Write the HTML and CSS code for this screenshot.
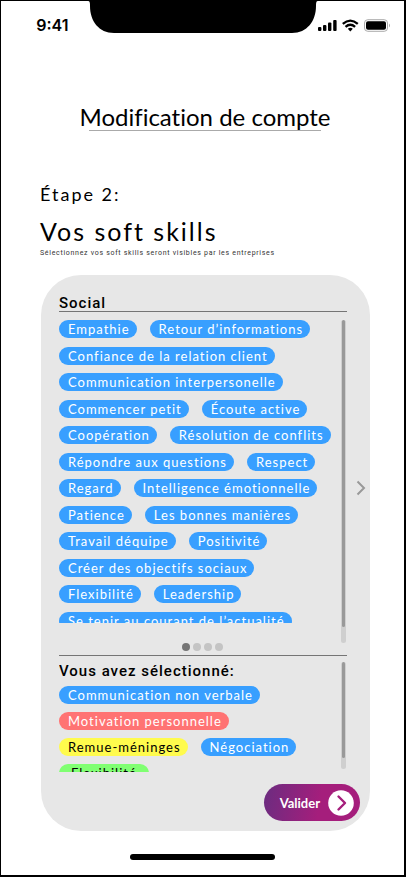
FILE: index.html
```html
<!DOCTYPE html>
<html lang="fr">
<head>
<meta charset="utf-8">
<meta name="viewport" content="width=device-width, initial-scale=1">
<title>Modification de compte</title>
<link rel="stylesheet" href="styles.css">
</head>
<body>
<div class="screen">
  <header class="status">
    <span class="time">9:41</span>
    <svg class="notch" width="230" height="32" viewBox="0 0 230 32" aria-hidden="true"><path d="M0 0C2 0 2 2 2 5C2 20 11 32 26 32H204C219 32 228 20 228 5C228 2 228 0 230 0Z"/></svg>
    <svg class="signals" width="73" height="14" viewBox="0 0 73 14" aria-hidden="true">
      <rect x="0" y="8" width="3.4" height="4" rx="1"/>
      <rect x="5" y="6" width="3.4" height="6" rx="1"/>
      <rect x="10" y="3.4" width="3.4" height="8.6" rx="1"/>
      <rect x="15.2" y="1" width="3.4" height="11" rx="1"/>
      <g fill="none" stroke="#000" stroke-width="2.3"><path d="M24.8 4.9Q32.3-1.7 39.8 4.9"/><path d="M27.5 7.9Q32.3 3.7 37.1 7.9"/></g>
      <path d="M29.8 9.8Q32.3 7.8 34.8 9.8L32.3 12.4Z"/>
      <rect x="46.5" y="0.7" width="23" height="11.6" rx="3.3" fill="none" stroke="#aaa"/>
      <rect x="48" y="2.2" width="20" height="8.6" rx="2"/>
      <path d="M71 4.5Q73 6.5 71 8.5Z" fill="#aaa"/>
    </svg>
  </header>
  <main>
    <h1>Modification de compte</h1>
    <section class="intro">
      <p class="step">Étape 2:</p>
      <h2>Vos soft skills</h2>
      <p class="note">Sélectionnez vos soft skills seront visibles par les entreprises</p>
    </section>
    <section class="card">
      <div class="panel">
        <h3>Social</h3>
        <div class="scroller social">
          <div class="view">
            <div class="rows">
              <div class="row"><button class="tag">Empathie</button><button class="tag">Retour d’informations</button></div>
              <div class="row"><button class="tag">Confiance de la relation client</button></div>
              <div class="row"><button class="tag">Communication interpersonelle</button></div>
              <div class="row"><button class="tag">Commencer petit</button><button class="tag">Écoute active</button></div>
              <div class="row"><button class="tag">Coopération</button><button class="tag">Résolution de conflits</button></div>
              <div class="row"><button class="tag">Répondre aux questions</button><button class="tag">Respect</button></div>
              <div class="row"><button class="tag">Regard</button><button class="tag">Intelligence émotionnelle</button></div>
              <div class="row"><button class="tag">Patience</button><button class="tag">Les bonnes manières</button></div>
              <div class="row"><button class="tag">Travail déquipe</button><button class="tag">Positivité</button></div>
              <div class="row"><button class="tag">Créer des objectifs sociaux</button></div>
              <div class="row"><button class="tag">Flexibilité</button><button class="tag">Leadership</button></div>
              <div class="row"><button class="tag">Se tenir au courant de l’actualité</button></div>
            </div>
          </div>
          <div class="track"><div class="thumb"></div></div>
          <div class="dots"><i class="on"></i><i></i><i></i><i></i></div>
        </div>
        <div class="scroller chosen">
          <div class="view">
            <h3>Vous avez sélectionné:</h3>
            <div class="rows">
              <div class="row"><button class="tag">Communication non verbale</button></div>
              <div class="row"><button class="tag red">Motivation personnelle</button></div>
              <div class="row"><button class="tag yellow">Remue-méninges</button><button class="tag">Négociation</button></div>
              <div class="row"><button class="tag green">Flexibilité</button></div>
            </div>
          </div>
          <div class="track"><div class="thumb"></div></div>
        </div>
      </div>
      <button class="next" aria-label="Catégorie suivante"><svg width="10" height="16" viewBox="0 0 10 16"><path d="M1.5 1.5L8 8L1.5 14.5" fill="none" stroke="#999" stroke-width="2"/></svg></button>
      <button class="submit">Valider
        <svg width="26" height="26" viewBox="0 0 26 26" aria-hidden="true"><circle cx="13" cy="13" r="12.8" fill="#fff"/><path d="M10.5 6.5L17 13L10.5 19.5" fill="none" stroke="#a51e7c" stroke-width="2.4" stroke-linecap="round" stroke-linejoin="round"/></svg>
      </button>
    </section>
  </main>
  <div class="home"></div>
</div>
</body>
</html>
```
FILE: styles.css
```css
* { box-sizing: border-box; }

body {
  margin: 0;
  background: #fff;
  color: #000;
  font-family: Lato, "Open Sans", sans-serif;
  font-variant-ligatures: none;
}

.screen {
  display: flex;
  flex-direction: column;
  min-height: 100vh;
  border: solid #000;
  border-width: 1px 2px 2px 1px;
}

h1, h2, h3, p { margin: 0; font-weight: 400; }

button {
  margin: 0;
  padding: 0;
  border: 0;
  background: none;
  font: inherit;
  color: inherit;
  cursor: pointer;
}

.status {
  display: grid;
  grid-template-columns: 1fr auto 1fr;
  height: 48px;
}

.time {
  justify-self: end;
  margin: 14px 19px 0 0;
  font: 600 16px/20px Inter, sans-serif;
}

.notch { display: block; }

.signals { margin: 18px 0 0 0; }

main { padding: 54px 34px 0 39px; }

h1 {
  width: fit-content;
  margin: 0 auto;
  font-size: 24px;
  line-height: 28px;
  background: linear-gradient(#aaa, #aaa) center bottom / 232px 1px no-repeat;
  white-space: nowrap;
}

.intro { margin-top: 52px; }

.step {
  font-size: 18px;
  line-height: 22px;
  letter-spacing: 2px;
}

h2 {
  margin-top: 11px;
  font-size: 25px;
  line-height: 30px;
  letter-spacing: 2px;
}

.note {
  margin-top: 1px;
  font: 7px/12px Roboto, sans-serif;
  letter-spacing: 0.1em;
  color: #333;
}

.card {
  display: grid;
  grid-template-columns: 1fr 10px;
  column-gap: 9px;
  margin: 16px 0 0 1px;
  padding: 20px 4px 10px 18px;
  border-radius: 40px;
  background: #e7e7e7;
}

h3 {
  font: 500 15px/16px Roboto, sans-serif;
  letter-spacing: 1px;
}

.panel > h3 {
  height: 17px;
  border-bottom: 1px solid #757575;
}

.scroller {
  display: grid;
  grid-template-columns: 1fr 5px;
  column-gap: 8px;
  padding-right: 1px;
}

.social {
  margin-top: 8px;
  padding-bottom: 11px;
  border-bottom: 1px solid #757575;
}

.social .view { height: 303px; }

.view { overflow: hidden; }

.rows {
  display: flex;
  flex-direction: column;
  justify-content: space-between;
}

.social .rows { height: 310px; }

.row { display: flex; gap: 13px; }

.tag {
  height: 18px;
  padding: 0 7px 0 9px;
  border-radius: 9px;
  background: #389fff;
  color: #fff;
  font-size: 13px;
  line-height: 18px;
  letter-spacing: 1px;
  white-space: nowrap;
}

.red { background: #ff7373; }
.yellow { background: #fffb4d; color: #000; }
.green { background: #80ff72; color: #000; padding: 0 12px; }

.track {
  border-radius: 3px;
  background: #cfcfcf;
}

.thumb {
  width: 3px;
  height: 95%;
  margin: 0 auto;
  border-radius: 2px;
  background: #999;
}

.social .track { height: 323px; grid-column: 2; grid-row: 1 / span 2; }

.dots {
  grid-column: 1;
  align-self: end;
  display: flex;
  justify-content: center;
  gap: 3px;
  margin: 20px 0 -7px 13px;
}

.dots i {
  width: 8px;
  height: 8px;
  border-radius: 50%;
  background: #c4c4c4;
}

.dots .on { background: #757575; }

.chosen { margin-top: 6px; }
.chosen .view { height: 110px; }
.chosen h3 { margin: 1px 0 7px; }
.chosen .rows { gap: 8px; }
.chosen .track { height: 107px; }
.chosen .thumb { height: 90%; }

.next { align-self: center; margin-bottom: 91px; }
.next svg, .submit svg { display: block; }

.submit {
  grid-column: 1 / -1;
  justify-self: end;
  display: flex;
  align-items: center;
  gap: 8px;
  height: 37px;
  margin: 12px 6px 0 0;
  padding: 0 6px 0 16px;
  border-radius: 19px;
  background: linear-gradient(100deg, #6b2c80, #a51e7c 58%, #a51e7c);
  color: #fff;
  font-size: 13px;
  font-weight: 700;
}

.home {
  width: 145px;
  height: 6px;
  margin: 23px auto 15px;
  border-radius: 3px;
  background: #000;
}
```
